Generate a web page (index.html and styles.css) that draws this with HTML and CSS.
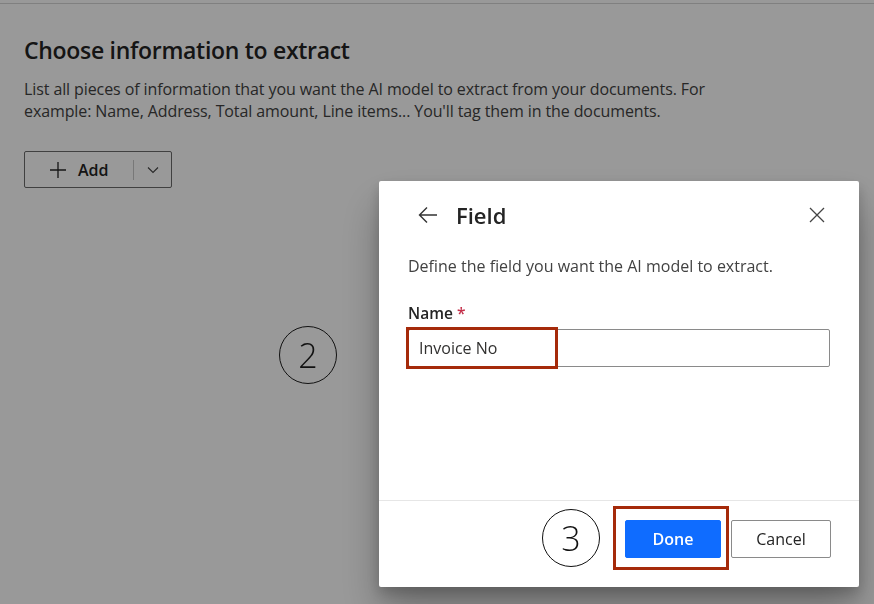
FILE: index.html
```html
<!DOCTYPE html>
<html>
<head>
<meta charset="utf-8">
<link rel="stylesheet" href="styles.css">
</head>
<body>
<div class="topbar"></div>
<main class="page">
  <h1 class="page-title">Choose information to extract</h1>
  <p class="page-desc">List all pieces of information that you want the AI model to extract from your documents. For example: Name, Address, Total amount, Line items... You'll tag them in the documents.</p>
  <div class="split-btn">
    <span class="split-main">
      <svg width="18" height="18" viewBox="0 0 18 18"><path d="M9 1v16M1 9h16" stroke="#242424" stroke-width="1.3" fill="none"/></svg>
      <span>Add</span>
    </span>
    <span class="split-sep"></span>
    <span class="split-chev">
      <svg width="14" height="14" viewBox="0 0 14 14"><path d="M2 4.5l5 5 5-5" stroke="#444" stroke-width="1.1" fill="none"/></svg>
    </span>
  </div>
</main>
<div class="overlay"></div>

<section class="dialog">
  <header class="dlg-head">
    <svg class="back" width="22" height="22" viewBox="0 0 22 22"><path d="M20 11H2.5M10 3.5L2.5 11l7.5 7.5" stroke="#333" stroke-width="1.4" fill="none"/></svg>
    <h2 class="dlg-title">Field</h2>
    <svg class="close" width="16" height="16" viewBox="0 0 16 16"><path d="M1 1l14 14M15 1L1 15" stroke="#444" stroke-width="1.3" fill="none"/></svg>
  </header>
  <div class="dlg-body">
    <p class="dlg-desc">Define the field you want the AI model to extract.</p>
    <label class="dlg-label">Name <span class="req">*</span></label>
    <div class="input">Invoice No</div>
  </div>
  <footer class="dlg-foot">
    <button class="btn primary">Done</button>
    <button class="btn">Cancel</button>
  </footer>
</section>

<div class="mark mark-input"></div>
<div class="mark mark-done"></div>
<div class="step step-2">2</div>
<div class="step step-3">3</div>
</body>
</html>
```
FILE: styles.css
```css
* { box-sizing: border-box; }
html, body { margin: 0; height: 100%; }
body {
  background: #ffffff;
  font-family: "Open Sans", "Noto Sans", sans-serif;
  color: #242424;
  overflow: hidden;
}
.topbar {
  height: 4px;
  border-bottom: 1px solid #d6d6d6;
}
.page {
  padding: 31px 24px 0;
}
.page-title {
  margin: 0;
  font-size: 23px;
  font-weight: 600;
  letter-spacing: -0.3px;
  color: #242424;
  line-height: 30px;
}
.page-desc {
  margin: 13px 0 0;
  font-size: 16px;
  line-height: 22px;
  color: #424242;
  width: 730px;
  letter-spacing: -0.1px;
}
.split-btn {
  margin-top: 29px;
  display: inline-flex;
  align-items: center;
  height: 37px;
  width: 148px;
  border: 1px solid #6b6b6b;
  border-radius: 2px;
  background: #fff;
}
.split-main {
  display: flex;
  align-items: center;
  gap: 11px;
  padding-left: 24px;
  width: 108px;
  font-size: 16px;
  font-weight: 600;
  color: #242424;
}
.split-sep {
  width: 1px;
  height: 20px;
  background: #c8c8c8;
}
.split-chev {
  display: flex;
  flex: 1;
  justify-content: center;
}
.overlay {
  position: fixed;
  inset: 0;
  background: rgba(0, 0, 0, 0.4);
}
.dialog {
  position: fixed;
  left: 379px;
  top: 181px;
  width: 480px;
  height: 406px;
  background: #fff;
  border-radius: 2px;
  box-shadow: 0 25px 40px rgba(0, 0, 0, 0.28), 0 6px 14px rgba(0, 0, 0, 0.2);
  display: flex;
  flex-direction: column;
}
.dlg-head {
  display: flex;
  align-items: center;
  padding: 17px 34px 0 38px;
  height: 51px;
}
.back { margin-right: 17px; }
.dlg-title {
  margin: 0;
  font-size: 22px;
  font-weight: 600;
  color: #242424;
  flex: 1;
  line-height: 30px;
}
.dlg-body {
  padding: 24px 29px 0 29px;
  flex: 1;
}
.dlg-desc {
  margin: 0;
  font-size: 16px;
  color: #424242;
  line-height: 20px;
}
.dlg-label {
  display: block;
  margin-top: 27px;
  font-size: 15.5px;
  font-weight: 600;
  color: #242424;
  line-height: 20px;
}
.req { color: #c4314b; }
.input {
  margin-top: 6px;
  height: 38px;
  border: 1px solid #8a8a8a;
  border-radius: 2px;
  padding: 0 10px;
  display: flex;
  align-items: center;
  font-size: 16px;
  color: #323130;
}
.dlg-foot {
  border-top: 1px solid #e6e6e6;
  height: 87px;
  display: flex;
  justify-content: flex-end;
  align-items: center;
  gap: 10px;
  padding: 0 28px 10px 0;
}
.btn {
  font-family: inherit;
  height: 38px;
  width: 100px;
  border: 1px solid #8a8a8a;
  border-radius: 2px;
  background: #fff;
  font-size: 16px;
  color: #242424;
  padding: 0;
}
.btn.primary {
  background: #0f6cff;
  border-color: #0f6cff;
  color: #fff;
  font-weight: 600;
  width: 96px;
}
.mark {
  position: fixed;
  border: 3px solid #a52a0a;
}
.mark-input { left: 406px; top: 327px; width: 152px; height: 42px; }
.mark-done { left: 613px; top: 506px; width: 116px; height: 64px; }
.step {
  position: fixed;
  width: 58px;
  height: 58px;
  border: 1.5px solid #111;
  border-radius: 50%;
  display: flex;
  align-items: center;
  justify-content: center;
  font-family: "Open Sans", sans-serif;
  font-weight: 300;
  font-size: 34px;
  color: #111;
}
.step-2 { left: 279px; top: 326px; }
.step-3 { left: 542px; top: 509px; }
```
